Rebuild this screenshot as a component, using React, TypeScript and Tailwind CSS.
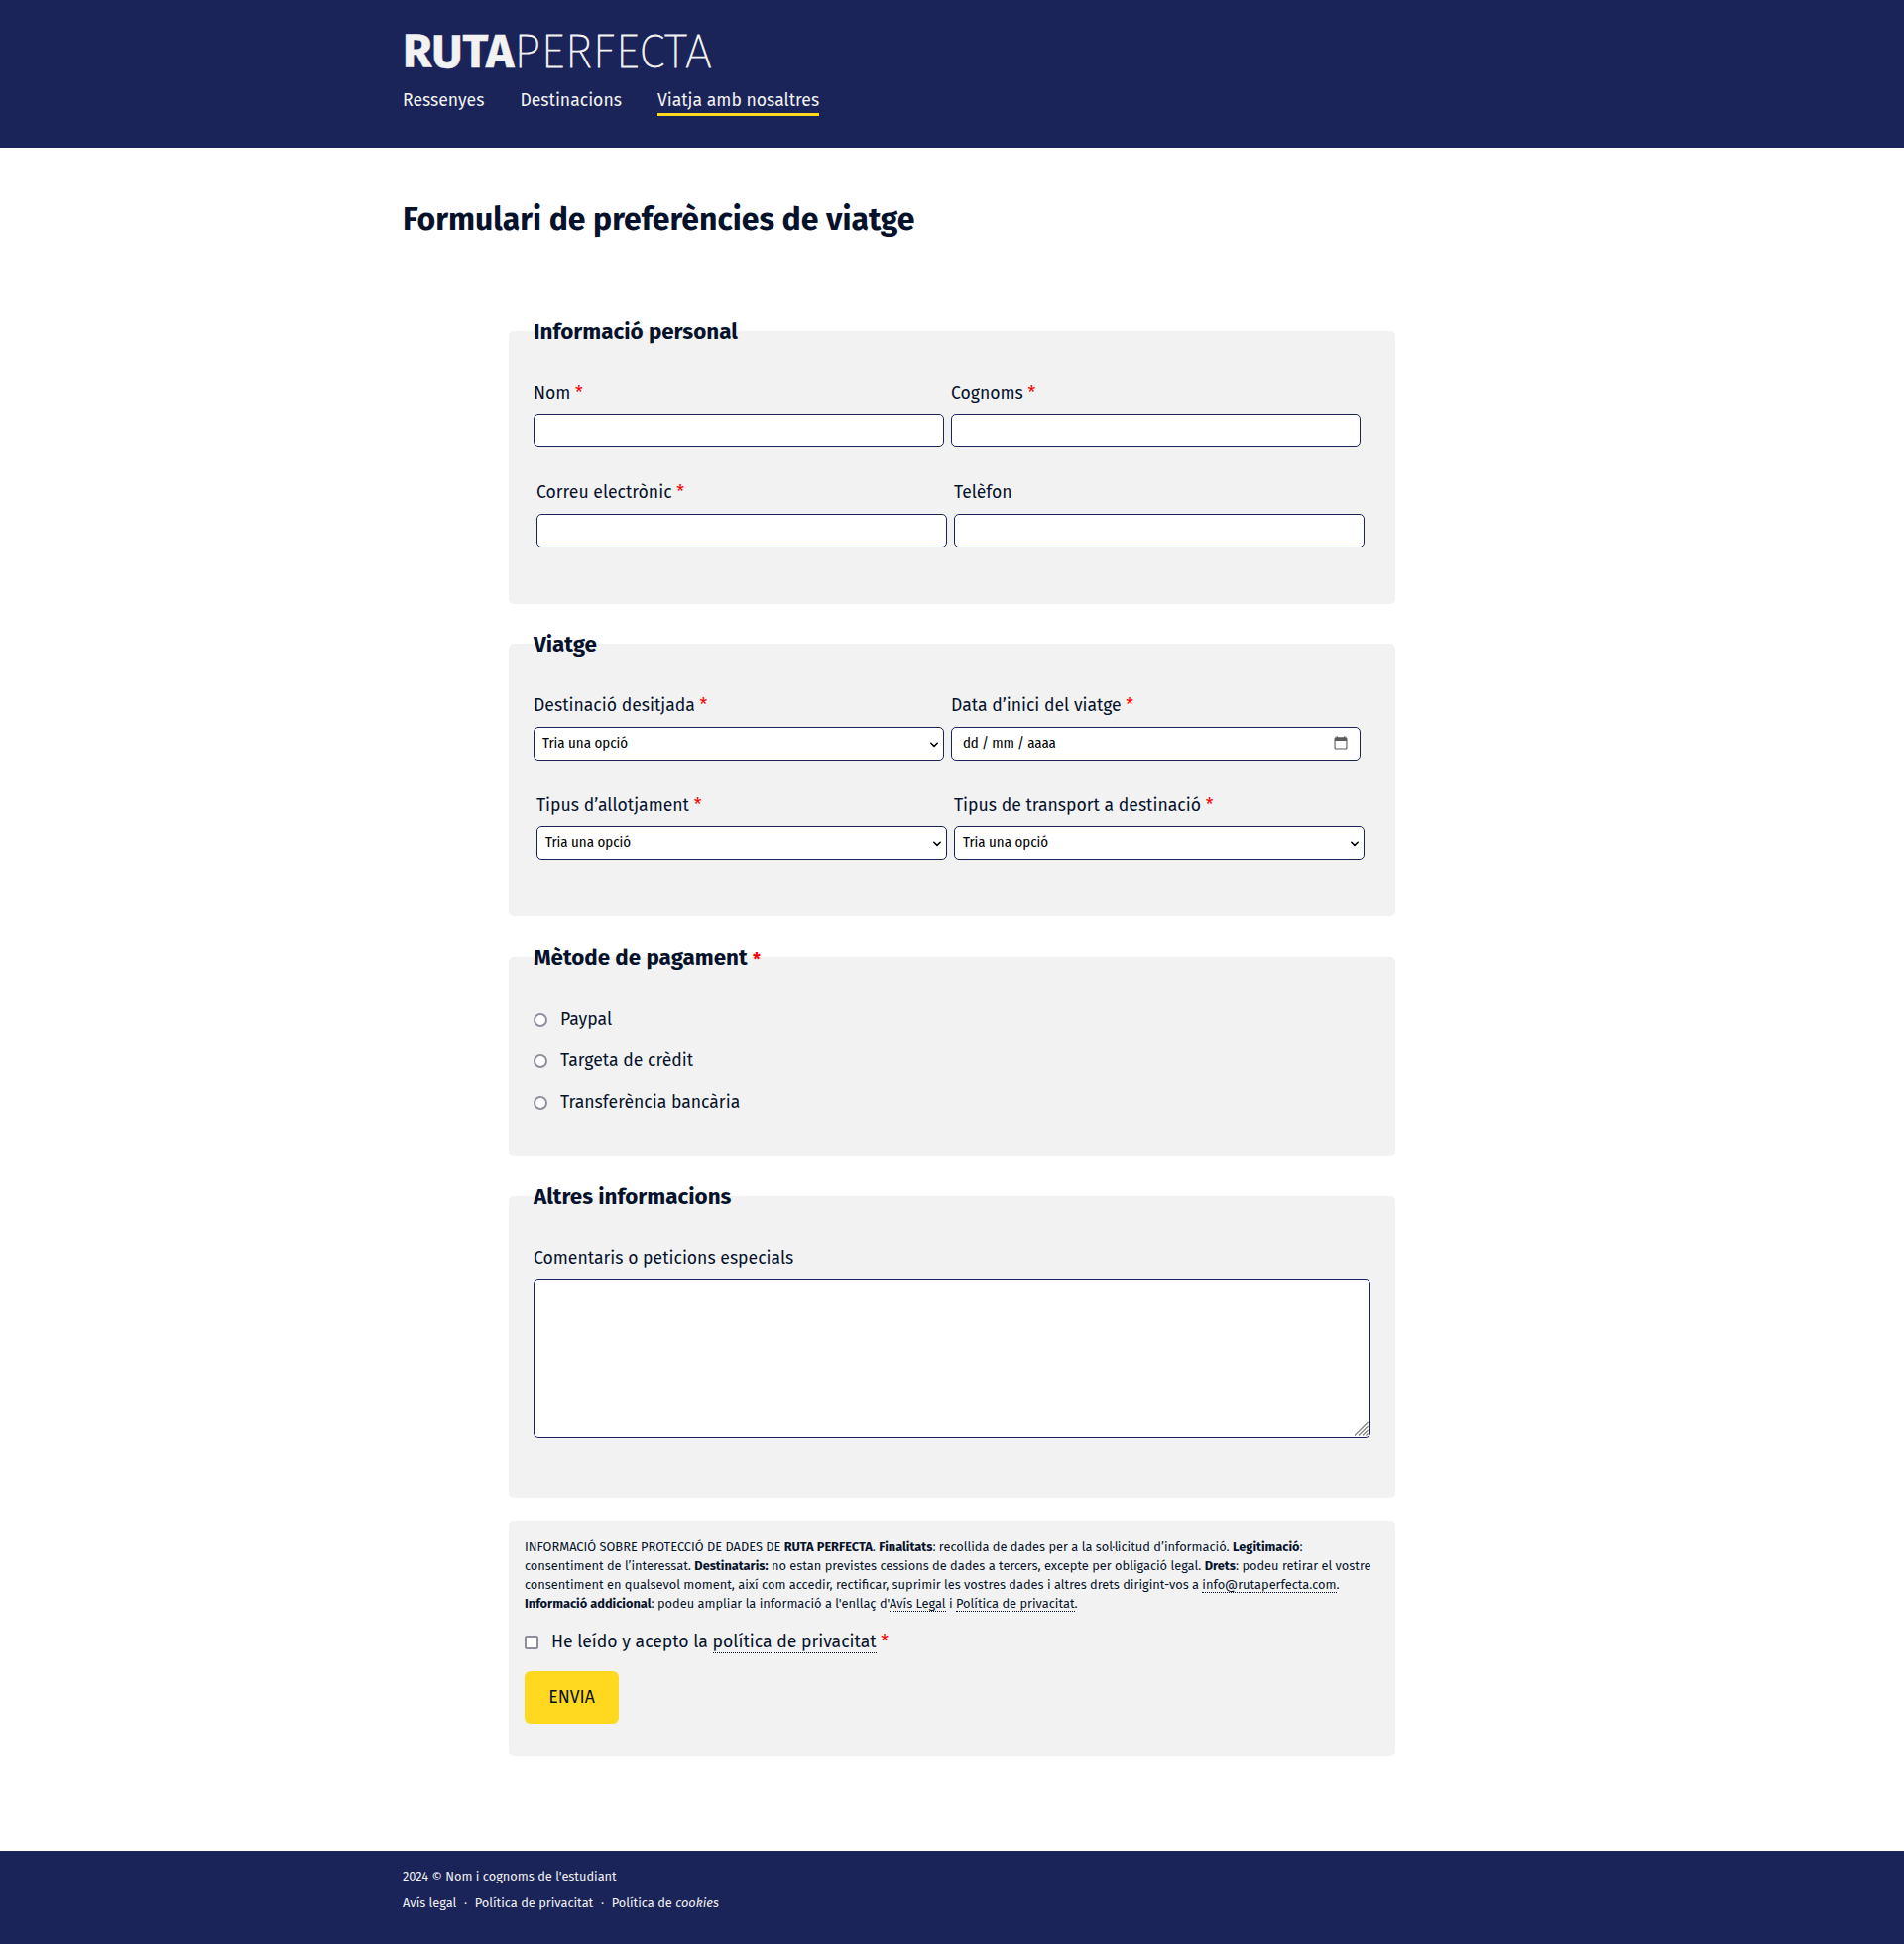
import type { ReactNode } from "react";

function Required({ className = "" }: { className?: string }) {
  return <span className={`text-[#ff0000] ${className}`}>*</span>;
}

function Section({ title, className, children }: { title: ReactNode; className: string; children: ReactNode }) {
  return (
    <section className={`flex flex-col rounded-[5px] bg-[#f2f2f2] pr-[25px] pl-[25px] ${className}`}>
      <h2 className="-mt-[13px] mb-[37px] h-[27px] text-[22.4px] leading-[27px] font-bold">{title}</h2>
      {children}
    </section>
  );
}

const control = "h-[34px] w-full rounded-[5px] border border-[#1b2459] bg-white text-black";

function Field({ label, required, className = "", children }: { label: string; required?: boolean; className?: string; children: ReactNode }) {
  return (
    <div className={`flex flex-col ${className}`}>
      <label className="h-6 text-[17.6px] leading-6">
        {label} {required && <Required />}
      </label>
      {children}
    </div>
  );
}

function Select() {
  return (
    <div className={`${control} flex items-center justify-between pr-[5px] pl-2`}>
      <span className="-mt-[2px] font-[Fira_Sans_Condensed,Fira_Sans,sans-serif] text-[14.85px] leading-5">Tria una opció</span>
      <svg width="8" height="6" viewBox="0 0 8 6" className="mt-px" fill="none" stroke="#000" strokeWidth="1.5" strokeLinecap="round" strokeLinejoin="round">
        <path d="M0.8 1.2 4 4.4 7.2 1.2" />
      </svg>
    </div>
  );
}

function DateInput() {
  return (
    <div className={`${control} flex items-center justify-between pr-3 pl-[11px]`}>
      <span className="-mt-[2px] font-[Fira_Sans_Condensed,Fira_Sans,sans-serif] text-[14.85px] leading-5 tracking-[-0.13px]">dd / mm / aaaa</span>
      <svg width="14" height="14" viewBox="0 0 14 14" fill="#5b5b5b" className="-mt-[3px]">
        <path fillRule="evenodd" d="M2 1.2h.6V.2h1.300v1h6.200V.2h1.300v1H12a1.500 1.500 0 0 1 1.500 1.500v9.300a1.500 1.500 0 0 1-1.500 1.500H2A1.500 1.500 0 0 1 .5 12V2.700A1.500 1.500 0 0 1 2 1.200ZM1.600 5v6.800c0 .4.2.6.6.6h9.600c.4 0 .6-.2.6-.6V5Z" />
      </svg>
    </div>
  );
}

function DottedLink({ children }: { children: ReactNode }) {
  return <a className="border-b border-dotted border-[#06122b]">{children}</a>;
}

export default function App() {
  return (
    <div className="flex h-[1960px] w-[1920px] flex-col bg-white font-[Fira_Sans,Noto_Sans,sans-serif] text-[#06122b]">
      <header className="flex h-[149px] flex-col bg-[#1b2459] pl-[406px] text-[#f2f2f2]">
        <div className="mt-[22px] flex h-[60px] text-[48px] leading-[60px] whitespace-nowrap">
          <span className="font-bold [-webkit-text-stroke:0.4px_#f2f2f2]">RUTA</span>
          <span className="font-extralight tracking-[0.45px] [-webkit-text-stroke:0.9px_#f2f2f2]">PERFECTA</span>
        </div>
        <nav className="mt-2 flex gap-9 text-[17.6px] leading-6 whitespace-nowrap">
          <a>Ressenyes</a>
          <a>Destinacions</a>
          <a className="h-[27px] border-b-3 border-[#ffd91f]">Viatja amb nosaltres</a>
        </nav>
      </header>

      <main className="flex h-[1717px] flex-col">
        <h1 className="mt-[52px] mb-[93px] ml-[406px] h-10 text-[32px] leading-10 font-bold">
          Formulari de preferències de viatge
        </h1>
        <form className="ml-[513px] flex w-[894px] flex-col">
          <Section title="Informació personal" className="h-[275px]">
            <div className="flex gap-[7px]">
              <Field label="Nom" required className="w-[414px] gap-2"><div className={control} /></Field>
              <Field label="Cognoms" required className="w-[413px] gap-2"><div className={control} /></Field>
            </div>
            <div className="mt-[34px] ml-[3px] flex gap-[7px]">
              <Field label="Correu electrònic" required className="w-[414px] gap-[9px]"><div className={control} /></Field>
              <Field label="Telèfon" className="w-[414px] gap-[9px]"><div className={control} /></Field>
            </div>
          </Section>

          <Section title="Viatge" className="mt-10 h-[275px]">
            <div className="flex gap-[7px]">
              <Field label="Destinació desitjada" required className="w-[414px] gap-[9px]"><Select /></Field>
              <Field label="Data d’inici del viatge" required className="w-[413px] gap-[9px]"><DateInput /></Field>
            </div>
            <div className="mt-[34px] ml-[3px] flex gap-[7px]">
              <Field label="Tipus d’allotjament" required className="w-[414px] gap-2"><Select /></Field>
              <Field label="Tipus de transport a destinació" required className="w-[414px] gap-2"><Select /></Field>
            </div>
          </Section>

          <Section title={<>Mètode de pagament <Required className="relative top-px text-[17.6px]" /></>} className="mt-[41px] h-[201px]">
            <div className="flex flex-col gap-[18px]">
              {["Paypal", "Targeta de crèdit", "Transferència bancària"].map((method) => (
                <label key={method} className="flex h-6 items-center gap-[13px] text-[17.6px] leading-6">
                  <span className="size-[14px] rounded-full border-2 border-[#8f8f9d] bg-white" />
                  {method}
                </label>
              ))}
            </div>
          </Section>

          <Section title="Altres informacions" className="mt-10 h-[304px]">
            <Field label="Comentaris o peticions especials" className="gap-[9px]">
              <div className="flex h-40 items-end justify-end rounded-[5px] border border-[#1b2459] bg-white">
                <svg width="16" height="16" viewBox="0 0 16 16" fill="none" stroke="#85858b" strokeWidth="1.3">
                  <path d="M1 14.500 14.500 1M5 14.500 14.500 5M9 14.500 14.500 9M12.500 14.500 14.500 12.500" />
                </svg>
              </div>
            </Field>
          </Section>

          <section className="mt-6 flex h-[236px] flex-col items-start rounded-[5px] bg-[#f2f2f2] pt-4 pl-4">
            <p className="text-[12.8px] leading-[19px] whitespace-nowrap">
              INFORMACIÓ SOBRE PROTECCIÓ DE DADES DE <b>RUTA PERFECTA</b>. <b>Finalitats</b>: recollida de dades per a la so<span className="tracking-[-0.6px]">l·l</span>icitud d’informació. <b>Legitimació</b>:
              <br />
              consentiment de l’interessat. <b>Destinataris:</b> no estan previstes cessions de dades a tercers, excepte per obligació legal. <b>Drets</b>: podeu retirar el vostre
              <br />
              consentiment en qualsevol moment, així com accedir, rectificar, suprimir les vostres dades i altres drets dirigint-vos a <DottedLink>info@rutaperfecta.com</DottedLink>.
              <br />
              <b>Informació addicional</b>: podeu ampliar la informació a l'enllaç d'<DottedLink>Avís Legal</DottedLink> i <DottedLink>Política de privacitat</DottedLink>.
            </p>
            <label className="mt-[18px] flex h-6 items-center gap-[13px] text-[17.6px] leading-6">
              <span className="size-[14px] rounded-[2px] border-2 border-[#8f8f9d] bg-white" />
              <span>He leído y acepto la <DottedLink>política de privacitat</DottedLink> <Required /></span>
            </label>
            <button type="button" className="mt-[17px] flex h-[53px] w-[95px] items-center justify-center rounded-[6px] bg-[#ffd91f] pt-px text-[17.6px] leading-6">
              ENVIA
            </button>
          </section>
        </form>
      </main>

      <footer className="flex h-[94px] flex-col gap-2 bg-[#1b2459] pt-4 pl-[406px] text-[12.8px] leading-[19px] text-[#f2f2f2]">
        <p>2024 © Nom i cognoms de l'estudiant</p>
        <p className="flex gap-[7.700px]">
          <a>Avís legal</a>
          <span>·</span>
          <a>Política de privacitat</a>
          <span>·</span>
          <a>Política de <i>cookies</i></a>
        </p>
      </footer>
    </div>
  );
}
